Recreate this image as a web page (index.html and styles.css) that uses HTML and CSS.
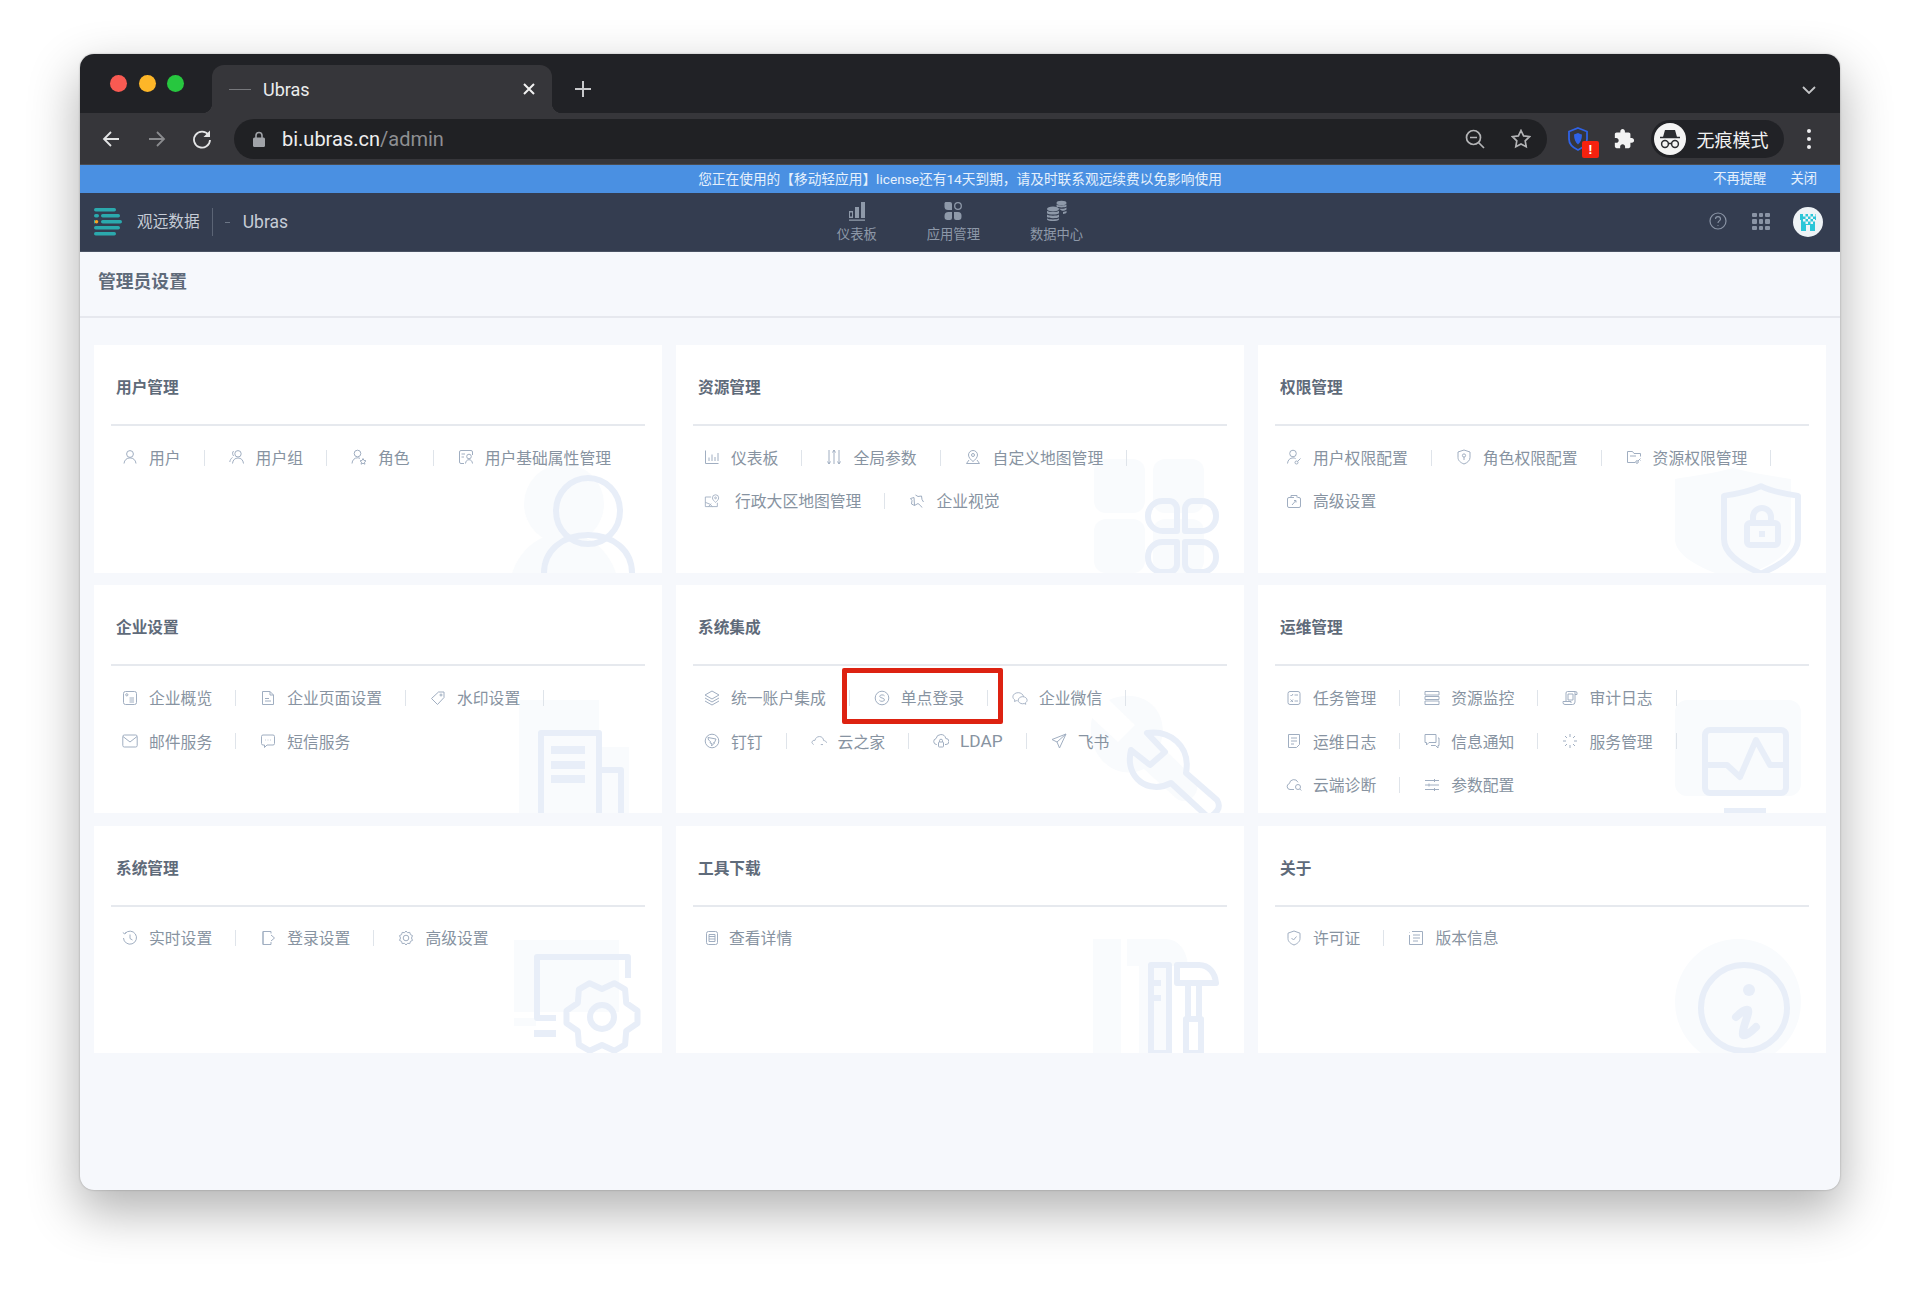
FILE: index.html
```html
<!DOCTYPE html>
<html lang="zh-CN">
<head>
    <meta charset="UTF-8">
    <title>Ubras</title>
    <link rel="stylesheet" href="styles.css">
</head>
<body>
    <svg class="sprite" xmlns="http://www.w3.org/2000/svg">
        <symbol id="i-user" viewBox="0 0 16 16"><circle cx="8" cy="5" r="3.4"/><path d="M2 14.5c.4-3.6 2.8-5.6 6-5.6s5.600 2 6 5.600"/></symbol>
        <symbol id="i-users" viewBox="0 0 16 16"><circle cx="9" cy="4.800" r="3.200"/><path d="M3.500 14.500c.4-3.600 2.500-5.500 5.500-5.500s5.100 1.900 5.500 5.500M4.700 2C3.300 2.800 3.200 5.500 4.600 7M3.500 8.500C2 9.500 1 11 .8 13"/></symbol>
        <symbol id="i-role" viewBox="0 0 16 16"><circle cx="6.500" cy="4.500" r="3.300"/><path d="M1 14.500c.3-3.600 2.500-5.700 5.500-5.700 1 0 1.800.2 2.500.6M12 9.500l1 2 2 .3-1.500 1.400.4 2-1.900-1-1.900 1 .4-2-1.500-1.400 2-.3z"/></symbol>
        <symbol id="i-attr" viewBox="0 0 16 16"><path d="M14.500 6V3a1.500 1.500 0 0 0-1.500-1.500H3A1.500 1.500 0 0 0 1.500 3v10A1.500 1.500 0 0 0 3 14.500h3M3.500 5h3.500M3.500 8H6"/><circle cx="11" cy="7.500" r="2.300"/><path d="M7.500 14.500c.3-2.500 1.600-3.800 3.500-3.800s3.200 1.300 3.500 3.800"/></symbol>
        <symbol id="i-chart" viewBox="0 0 16 16"><path d="M1.500 1.500v13h13M5 12V8.500M8 12V5.500M11 12V8M14 12V4"/></symbol>
        <symbol id="i-sliders" viewBox="0 0 16 16"><path d="M3 1v14M1.500 12.500L3 15l1.500-2.500M8 1v14M6.500 3.500L8 1l1.500 2.500M13 1v14M11.500 12.500L13 15l1.500-2.500"/></symbol>
        <symbol id="i-pin" viewBox="0 0 16 16"><path d="M8 1.500a4.500 4.500 0 0 0-4.500 4.500c0 2.500 2.500 5 4.500 6.500 2-1.500 4.500-4 4.500-6.500A4.500 4.500 0 0 0 8 1.500zM4 11l-2.500 3.500h13L12 11"/><circle cx="8" cy="6" r="1.500"/></symbol>
        <symbol id="i-map" viewBox="0 0 18 16"><path d="M8 3.500H1.500v10.800h13.500V10M1.500 9.500l5 2 3 2.800M5 14.300l3-3.300"/><path d="M13 1a3.500 3.500 0 0 0-3.500 3.500c0 2 2 3.700 3.500 5 1.500-1.300 3.500-3 3.500-5A3.500 3.500 0 0 0 13 1z"/><circle cx="13" cy="4.500" r="1"/></symbol>
        <symbol id="i-vision" viewBox="0 0 16 16"><path d="M6.500 2L9 3.500l3.500-.5.500 3.500 1.500 2.500M5.500 12.500L2.500 11 3 7.500 1.500 5.500l3.500-1zM9 10.500l2.500 2 1.500 2"/><path d="M5.500 12.500L9 10.500"/></symbol>
        <symbol id="i-userkey" viewBox="0 0 16 16"><circle cx="7" cy="4.500" r="3.300"/><path d="M1.500 14.500c.3-3.500 2.500-5.600 5.500-5.600 1 0 1.900.2 2.600.7M14.500 9.500l-3 3"/><circle cx="10.500" cy="13.500" r="1.500"/></symbol>
        <symbol id="i-shieldkey" viewBox="0 0 16 16"><path d="M8 1l6 2v5.500c0 3-2.500 5.200-6 6.500-3.500-1.300-6-3.500-6-6.500V3z"/><circle cx="8" cy="6.500" r="1.600"/><path d="M8 8v3"/></symbol>
        <symbol id="i-folderkey" viewBox="0 0 16 16"><path d="M9 13.500H1.500v-11h5l1.500 2h6.500v3M4 7h6"/><circle cx="11" cy="13" r="1.300"/><path d="M12 12l2.500-2.500M13.500 10.500l1 1"/></symbol>
        <symbol id="i-boxlink" viewBox="0 0 16 16"><path d="M5 4.500V2.500h6v2M11.500 4.500H13a1.500 1.500 0 0 1 1.500 1.500v7a1.500 1.500 0 0 1-1.500 1.500H3A1.500 1.500 0 0 1 1.500 13V6A1.500 1.500 0 0 1 3 4.500h5M6 12l3.500-4M8 7.500h2v2"/></symbol>
        <symbol id="i-overview" viewBox="0 0 16 16"><rect x="1.500" y="1.500" width="13" height="13" rx="2"/><circle cx="4.800" cy="4.800" r="1.100"/><path d="M7.500 8h4.500M7.500 10h4.500M7.500 12h4.500"/></symbol>
        <symbol id="i-doc" viewBox="0 0 16 16"><path d="M2.500 1.500h7.500l3.500 3.500v9.500h-11zM10 1.500V5h3.500M5 8.500h4M5 11h6"/></symbol>
        <symbol id="i-tag" viewBox="0 0 16 16"><path d="M8.500 2H14v5.500L7.500 14.500 1.500 8.500z"/><circle cx="11" cy="5" r="1"/></symbol>
        <symbol id="i-mail" viewBox="0 0 16 16"><rect x=".8" y="2" width="14.400" height="12" rx="1.500"/><path d="M1 3.500l7 5.500 7-5.500"/></symbol>
        <symbol id="i-sms" viewBox="0 0 16 16"><path d="M3 2h10a1.500 1.500 0 0 1 1.500 1.500v7A1.500 1.500 0 0 1 13 12H7l-2.500 2.500V12H3a1.500 1.500 0 0 1-1.500-1.500v-7A1.500 1.500 0 0 1 3 2z"/><path d="M5 7h.6M7.700 7h.6M10.400 7h.6"/></symbol>
        <symbol id="i-layers" viewBox="0 0 16 16"><path class="soft" d="M8 1L15 5 8 9 1 5z"/><path d="M1 8l7 4 7-4M1 11l7 4 7-4"/></symbol>
        <symbol id="i-sso" viewBox="0 0 16 16"><circle cx="8" cy="8" r="6.800"/><path d="M10.500 5.800C9.800 4.600 6 4.400 5.700 6.200 5.400 8.400 10.800 7.500 10.500 10c-.3 1.800-4.300 1.700-5.100.200"/></symbol>
        <symbol id="i-wechat" viewBox="0 0 18 16"><path d="M7 2C3.700 2 1 4 1 6.600c0 1.500.9 2.700 2.200 3.600L2.800 12l2-1c.5.100 1 .2 1.500.2"/><path d="M13 6.500c-.5-2.600-3-4.500-6-4.500M12 6.500c-2.800 0-5 1.800-5 4s2.200 4 5 4c.6 0 1.200-.1 1.700-.3l1.800.9-.4-1.700c1.200-.7 1.900-1.800 1.900-2.900 0-2.200-2.200-4-5-4z"/></symbol>
        <symbol id="i-ding" viewBox="0 0 16 16"><circle cx="8" cy="8" r="6.800"/><path class="soft" d="M4 4.500l8 1.500-1.500 3.500-1 .2 1 .3-3 3 .5-2.500-2-.5.500-1.500L4.500 7z"/></symbol>
        <symbol id="i-cloud" viewBox="0 0 18 16"><path d="M1 9.500C1.500 7.500 3 7 4.500 7.300 5 4.500 7 3 9.500 3c2.800 0 4.500 2 4.700 4.500 1.800.1 3 1 3.300 2.500M1 9.500c.3 1.200 1 2 2 2.500M13.500 12H11"/></symbol>
        <symbol id="i-ldap" viewBox="0 0 16 16"><path d="M4 11.500H3.500A3 3 0 0 1 3 5.600 5 5 0 0 1 12.800 5.500a3 3 0 0 1 .2 6H12"/><rect x="5.500" y="9" width="5" height="5" rx=".8"/><path d="M6.500 9V7.700a1.500 1.500 0 0 1 3 0V9"/></symbol>
        <symbol id="i-plane" viewBox="0 0 16 16"><path d="M15 1L1 6.500l5 2.500 2.500 6zM6 9l9-8"/></symbol>
        <symbol id="i-task" viewBox="0 0 16 16"><rect x="2" y="1.500" width="12" height="13" rx="2"/><path d="M8.500 5H12M8.500 11H12M4.500 5l1 1 1.500-2M4.500 9.500l2.500 2.500M7 9.500L4.500 12"/></symbol>
        <symbol id="i-rows" viewBox="0 0 16 16"><path d="M1 1.500h14v3.500H1zM1 6.500h14v3H1zM1 11h14v3.500H1z"/></symbol>
        <symbol id="i-audit" viewBox="0 0 16 16"><path d="M4 11.500V3a1.500 1.500 0 0 1 1.500-1.500h8A1.500 1.500 0 0 1 15 3v1.500h-2M13 1.500V12a2.500 2.500 0 0 1-2.500 2.500H3a2 2 0 0 1-2-2v-1h8V13"/><path class="soft" d="M6 4h5v6H6z"/></symbol>
        <symbol id="i-log" viewBox="0 0 16 16"><path d="M2.500 1.500h11v10l-3 3h-8zM5 5h6M5 8h6M5 11h3"/></symbol>
        <symbol id="i-msg" viewBox="0 0 16 16"><path d="M1 1.500h11v8H5l-2.500 2.500V9.500H1zM14 5h1v7.500h-1V15l-2.500-2.500H7"/></symbol>
        <symbol id="i-spin" viewBox="0 0 16 16"><path d="M8 1v3M8 12v3M1 8h3M12 8h3M3 3l2 2M11 11l2 2M3 13l2-2M11 5l2-2"/></symbol>
        <symbol id="i-clouddiag" viewBox="0 0 16 16"><path d="M8 12.500H4a3 3 0 0 1-.6-5.900A4.500 4.500 0 0 1 12 5.300"/><circle cx="12" cy="10" r="2.500"/><path d="M13.800 12l1.500 1.500"/></symbol>
        <symbol id="i-params" viewBox="0 0 16 16"><path d="M1 3.500h14M1 8h14M1 12.500h14M10.500 2v3M5 6.500v3M10.500 11v3"/></symbol>
        <symbol id="i-history" viewBox="0 0 16 16"><path d="M3 3.500A6.500 6.500 0 1 1 1.500 8M.8 2.500l2 1.500 1.500-2M8 4.500V8.500l2.500 1.500"/></symbol>
        <symbol id="i-login" viewBox="0 0 16 16"><path d="M11 3.500V1.500H3v13h8V12M3 1.500l0 13M11 5l3.500 3L11 11"/></symbol>
        <symbol id="i-gear" viewBox="0 0 16 16"><path d="M8 1l1.500 1.700 2.300-.3.600 2.200 2.100 1L13.500 8l1 2.400-2.100 1-.6 2.200-2.300-.3L8 15l-1.500-1.700-2.300.3-.6-2.200-2.100-1L2.500 8l-1-2.400 2.100-1 .6-2.200 2.300.3z"/><circle cx="8" cy="8" r="2.800"/></symbol>
        <symbol id="i-details" viewBox="0 0 16 16"><rect x="2.500" y="1.500" width="11" height="13" rx="2"/><path class="soft" d="M5 4.500h6v7H5z"/><path d="M5 6.500h6M5 9h6"/></symbol>
        <symbol id="i-license" viewBox="0 0 16 16"><path d="M8 1l6 2.200v5.300c0 3-2.500 5.200-6 6.500-3.500-1.300-6-3.500-6-6.500V3.200zM5.500 8L7.500 10l3-3.500"/></symbol>
        <symbol id="i-version" viewBox="0 0 16 16"><path d="M1.500 2v.5M4 1.500h10.500v13h-13V5M5 5h7M5 8h7M5 11h5"/></symbol>
    </svg>

    <div class="window">
        <div class="tabstrip">
            <div class="lights"><i class="light red"></i><i class="light yellow"></i><i class="light green"></i></div>
            <div class="tab">
                <span class="favicon"></span>
                <span class="tab-title">Ubras</span>
                <svg class="tab-close" viewBox="0 0 14 14"><path d="M2 2l10 10M12 2L2 12"/></svg>
            </div>
            <svg class="tab-new" viewBox="0 0 18 18"><path d="M9 1v16M1 9h16"/></svg>
            <svg class="tab-list" viewBox="0 0 14 8"><path d="M1 1l6 6 6-6"/></svg>
        </div>

        <div class="toolbar">
            <svg class="tool-btn" viewBox="0 0 20 20"><path d="M18 10H3M10 3l-7 7 7 7"/></svg>
            <svg class="tool-btn dim" viewBox="0 0 20 20"><path d="M2 10h15M10 3l7 7-7 7"/></svg>
            <svg class="tool-btn" viewBox="0 0 20 20"><path d="M16.500 6A8 8 0 1 0 18 11"/><path class="solid" d="M18 1.500V8h-6.500z"/></svg>
            <div class="omnibox">
                <svg class="lock" viewBox="0 0 12 16"><path d="M3 7V4.500a3 3 0 0 1 6 0V7" fill="none" stroke="#a0a3a8" stroke-width="1.600"/><rect y="6.500" width="12" height="9.500" rx="1.500" fill="#a0a3a8"/></svg>
                <span class="url">bi.ubras.cn<span class="url-path">/admin</span></span>
                <svg class="omni-btn" viewBox="0 0 20 20"><circle cx="8.500" cy="8.500" r="7"/><path d="M5 8.500h7M13.500 13.500l5.500 5.500"/></svg>
                <svg class="omni-btn" viewBox="0 0 20 20"><path d="M10 1.500l2.600 5.400 5.900.800-4.300 4.100 1 5.900-5.200-2.800-5.200 2.800 1-5.900-4.300-4.100 5.900-.8z"/></svg>
            </div>
            <div class="ext-shield">
                <svg viewBox="0 0 20 24"><path d="M10 1l9 3.500v7.500c0 4.500-3.500 8.500-9 11-5.500-2.500-9-6.500-9-11V4.500z" fill="none" stroke="#2f62e6" stroke-width="1.800"/><path d="M10 6c2.500 1 4 1.500 4 1.500 0 4.500-1.500 8-4 10-2.500-2-4-5.500-4-10z" fill="#2f62e6"/></svg>
                <span class="ext-badge">!</span>
            </div>
            <svg class="ext-puzzle" viewBox="0 0 24 24"><path d="M20.500 11H19V7c0-1.100-.9-2-2-2h-4V3.500C13 2.120 11.880 1 10.500 1S8 2.120 8 3.500V5H4c-1.100 0-1.990.9-1.990 2v3.800H3.500c1.490 0 2.700 1.210 2.700 2.700s-1.210 2.700-2.700 2.700H2V20c0 1.100.9 2 2 2h3.800v-1.500c0-1.490 1.210-2.700 2.700-2.700 1.490 0 2.700 1.210 2.700 2.700V22H17c1.100 0 2-.9 2-2v-4h1.500c1.380 0 2.500-1.120 2.500-2.500S21.880 11 20.500 11z"/></svg>
            <div class="incognito">
                <svg class="incognito-face" viewBox="0 0 32 32"><circle cx="16" cy="16" r="16" fill="#f4f4f4"/><path d="M11 7h10l2 7H9z" fill="#2b2c30"/><path d="M6 14.500h20" stroke="#2b2c30" stroke-width="1.600"/><circle cx="11" cy="21" r="3.400" fill="none" stroke="#2b2c30" stroke-width="1.500"/><circle cx="21" cy="21" r="3.400" fill="none" stroke="#2b2c30" stroke-width="1.500"/><path d="M14.400 20.500h3.200" stroke="#2b2c30" stroke-width="1.300"/></svg>
                <span>无痕模式</span>
            </div>
            <div class="more"><i></i><i></i><i></i></div>
        </div>

        <div class="banner">
            <span class="banner-text">您正在使用的【移动轻应用】license还有14天到期，请及时联系观远续费以免影响使用</span>
            <div class="banner-links"><span>不再提醒</span><span>关闭</span></div>
        </div>

        <header class="appnav">
            <div class="brand">
                <svg class="logo" viewBox="0 0 28 28"><g fill="#2ba9ad"><rect x="0" y="0" width="22" height="3.400" rx="1.700"/><rect x="7" y="6" width="19" height="3.400" rx="1.700"/><rect x="7" y="12" width="21" height="3.400" rx="1.700"/><rect x="0" y="18" width="26" height="3.400" rx="1.700"/><rect x="0" y="24" width="22" height="3.400" rx="1.700"/><rect x="0" y="6" width="5" height="3.400" rx="1.700"/><rect x="0" y="12" width="1" height="3.400"/></g><circle cx="2.500" cy="13.700" r="1.800" fill="#f5a623"/></svg>
                <span class="brand-name">观远数据</span>
                <span class="brand-dash"></span>
                <span class="brand-org">Ubras</span>
            </div>
            <nav class="appnav-menu">
                <div class="menu-item">
                    <svg viewBox="0 0 20 22"><g fill="#8e99a9"><path d="M2 11h4v7H2zM3 12.500v4h2v-4z" fill-rule="evenodd"/><rect x="8" y="7" width="4" height="11"/><rect x="14" y="2" width="4" height="16"/><rect x="2" y="19.500" width="16" height="1.300"/></g></svg>
                    <span>仪表板</span>
                </div>
                <div class="menu-item">
                    <svg viewBox="0 0 20 22"><g fill="#8e99a9"><path d="M3 2h4a2 2 0 0 1 2 2v6H5a3.500 3.500 0 0 1-3.500-3.500V3.500C1.500 2.700 2.200 2 3 2z"/><path d="M9 12v6a2 2 0 0 1-2 2H4.500A3 3 0 0 1 1.500 17v-1A4 4 0 0 1 5.500 12z"/><path d="M11 12h4a3.500 3.500 0 0 1 3.500 3.500V17a3 3 0 0 1-3 3H13a2 2 0 0 1-2-2z"/></g><circle cx="15" cy="6" r="3.300" fill="none" stroke="#8e99a9" stroke-width="1.300"/></svg>
                    <span>应用管理</span>
                </div>
                <div class="menu-item">
                    <svg viewBox="0 0 22 22"><g fill="#8e99a9"><ellipse cx="15.500" cy="3" rx="5" ry="2.200"/><path d="M10.500 4.500c1 1.200 9 1.200 10 0V6.500c-1 1.200-9 1.200-10 0zM12.500 8.500c3 .5 6.800.3 8-1v2c-.8.900-2.500 1.200-4.500 1.300zM17 12c1.500-.1 2.800-.5 3.500-1.200v2c-.6.700-1.800 1.100-3.500 1.200z"/><ellipse cx="7" cy="9" rx="6" ry="2.500"/><path d="M1 10.800c1.200 1.600 10.800 1.600 12 0v2.500c-1.200 1.600-10.800 1.600-12 0zM1 14.500c1.200 1.600 10.800 1.600 12 0V17c-1.200 1.600-10.800 1.600-12 0zM1 18.200c1.200 1.600 10.800 1.600 12 0v1.300c-1.200 2-10.800 2-12 0z"/></g></svg>
                    <span>数据中心</span>
                </div>
            </nav>
            <div class="appnav-right">
                <svg class="help" viewBox="0 0 18 18"><circle cx="9" cy="9" r="8"/><path d="M6.500 7c0-3.300 5-3.300 5 0 0 2-2.500 1.800-2.500 4M9 13v.8"/></svg>
                <div class="apps"><i></i><i></i><i></i><i></i><i></i><i></i><i></i><i></i><i></i></div>
                <svg class="avatar" viewBox="0 0 30 30"><circle cx="15" cy="15" r="15" fill="#eef3f6"/><path d="M7 7h16v6h-1v11h-5v-6h-4v6H8V13H7z" fill="#2bc6d8"/><path d="M10 7h2.500v2.500H10zM15 7h2.500v2.500H15zM20 7h2.500v2.500H20zM12.500 9.500H15V12h-2.500zM17.500 9.500H20V12h-2.500zM10 12h2.500v2.500H10zM15 12h2.500v2.500H15zM20 12h2v2.500h-2zM12.500 14.500H15V17h-2.500zM17.500 14.500H20V17h-2.500z" fill="#eef3f6"/></svg>
            </div>
        </header>

        <main class="page">
            <h1 class="page-title">管理员设置</h1>
            <div class="cards">

                <section class="card">
                    <svg class="mark-bg" viewBox="0 0 160 130">
                        <g class="blob"><circle cx="62" cy="61" r="40"/><ellipse cx="62" cy="150" rx="55" ry="60"/></g>
                        <g class="line"><ellipse cx="86" cy="68" rx="32" ry="33"/><path d="M42 130c0-22 18-38 44-38s44 16 44 38"/></g>
                    </svg>
                    <h2 class="card-title">用户管理</h2>
                    <ul class="links">
                        <li><svg class="ico"><use href="#i-user"/></svg>用户</li>
                        <li><svg class="ico"><use href="#i-users"/></svg>用户组</li>
                        <li><svg class="ico"><use href="#i-role"/></svg>角色</li>
                        <li><svg class="ico"><use href="#i-attr"/></svg>用户基础属性管理</li>
                    </ul>
                </section>

                <section class="card">
                    <svg class="mark-bg" viewBox="0 0 160 130">
                        <g class="blob"><rect x="10" y="16" width="51" height="54" rx="12"/><rect x="69" y="16" width="51" height="54" rx="12"/><rect x="10" y="76" width="51" height="54" rx="12"/><rect x="69" y="76" width="51" height="54" rx="12"/></g>
                        <g class="line"><path d="M78.500 58H85a8 8 0 0 1 8 8v22H78.500A14.500 14.500 0 0 1 64 73.500v-1A14.500 14.500 0 0 1 78.500 58zM101 66a8 8 0 0 1 8-8h8.500A14.500 14.500 0 0 1 132 72.500v1A14.500 14.500 0 0 1 117.500 88H101zM64 113.500A14.500 14.500 0 0 1 78.500 99H93v22a8 8 0 0 1-8 8h-6.500A14.500 14.500 0 0 1 64 114.500zM101 99h16.500A14.500 14.500 0 0 1 132 113.500v1a14.500 14.500 0 0 1-14.500 14.500H109a8 8 0 0 1-8-8z"/></g>
                    </svg>
                    <h2 class="card-title">资源管理</h2>
                    <ul class="links">
                        <li><svg class="ico"><use href="#i-chart"/></svg>仪表板</li>
                        <li><svg class="ico"><use href="#i-sliders"/></svg>全局参数</li>
                        <li class="wide"><svg class="ico"><use href="#i-pin"/></svg>自定义地图管理</li>
                        <li class="wider"><svg class="ico"><use href="#i-map"/></svg>行政大区地图管理</li>
                        <li><svg class="ico"><use href="#i-vision"/></svg>企业视觉</li>
                    </ul>
                </section>

                <section class="card">
                    <svg class="mark-bg" viewBox="0 0 160 130">
                        <path class="blob" d="M9 36c18-3 40-6 58-11 18 5 40 8 58 11v60c0 16-24 30-58 40C33 126 9 112 9 96z"/>
                        <g class="line"><path d="M96 46c-10 5-23 8-37 10v45c0 15 15 26 37 36 22-10 37-21 37-36V56c-14-2-27-5-37-10z" transform="translate(-1 -1) scale(1 .96)"/><rect x="81" y="80" width="31" height="22" rx="3"/><path d="M87 80v-6a9 9 0 0 1 18 0v6M96 88v6"/></g>
                    </svg>
                    <h2 class="card-title">权限管理</h2>
                    <ul class="links">
                        <li><svg class="ico"><use href="#i-userkey"/></svg>用户权限配置</li>
                        <li><svg class="ico"><use href="#i-shieldkey"/></svg>角色权限配置</li>
                        <li><svg class="ico"><use href="#i-folderkey"/></svg>资源权限管理</li>
                        <li><svg class="ico"><use href="#i-boxlink"/></svg>高级设置</li>
                    </ul>
                </section>

                <section class="card">
                    <svg class="mark-bg" viewBox="0 0 160 130">
                        <path class="blob" d="M17 17h80v47h30v66H17z"/>
                        <g class="line"><path d="M39 130V50h58v80M97 87h22v43"/></g>
                        <g class="bars"><rect x="49" y="63" width="34" height="8"/><rect x="49" y="78" width="34" height="8"/><rect x="49" y="92" width="34" height="8"/></g>
                    </svg>
                    <h2 class="card-title">企业设置</h2>
                    <ul class="links">
                        <li><svg class="ico"><use href="#i-overview"/></svg>企业概览</li>
                        <li><svg class="ico"><use href="#i-doc"/></svg>企业页面设置</li>
                        <li><svg class="ico"><use href="#i-tag"/></svg>水印设置</li>
                        <li><svg class="ico"><use href="#i-mail"/></svg>邮件服务</li>
                        <li><svg class="ico"><use href="#i-sms"/></svg>短信服务</li>
                    </ul>
                </section>

                <section class="card">
                    <svg class="mark-bg" viewBox="0 0 160 130">
                        <path class="blob" d="M8 35l26 24 17-17-26-25C60 2 88 30 76 62l35 34c8 10-5 28-18 20L60 86C30 100 0 70 8 35z"/>
                        <g class="line"><path d="M47 67l19 15 15-13-18-19c22-3 44 12 39 40l31 27c5 8-1 13-8 18l-38-35c-22 12-47-5-40-33z"/></g>
                    </svg>
                    <h2 class="card-title">系统集成</h2>
                    <ul class="links">
                        <li><svg class="ico"><use href="#i-layers"/></svg>统一账户集成</li>
                        <li class="marked"><svg class="ico"><use href="#i-sso"/></svg>单点登录</li>
                        <li><svg class="ico"><use href="#i-wechat"/></svg>企业微信</li>
                        <li><svg class="ico"><use href="#i-ding"/></svg>钉钉</li>
                        <li><svg class="ico"><use href="#i-cloud"/></svg>云之家</li>
                        <li class="latin"><svg class="ico"><use href="#i-ldap"/></svg>LDAP</li>
                        <li><svg class="ico"><use href="#i-plane"/></svg>飞书</li>
                    </ul>
                </section>

                <section class="card">
                    <svg class="mark-bg" viewBox="0 0 160 130">
                        <rect class="blob" x="9" y="17" width="126" height="96" rx="12"/>
                        <g class="line"><rect x="39" y="47" width="81" height="63" rx="5"/><path d="M38 82h23l13 12 16-37 14 25h16"/></g>
                        <rect class="bars" x="58" y="125" width="42" height="5"/>
                    </svg>
                    <h2 class="card-title">运维管理</h2>
                    <ul class="links">
                        <li><svg class="ico"><use href="#i-task"/></svg>任务管理</li>
                        <li><svg class="ico"><use href="#i-rows"/></svg>资源监控</li>
                        <li><svg class="ico"><use href="#i-audit"/></svg>审计日志</li>
                        <li><svg class="ico"><use href="#i-log"/></svg>运维日志</li>
                        <li><svg class="ico"><use href="#i-msg"/></svg>信息通知</li>
                        <li><svg class="ico"><use href="#i-spin"/></svg>服务管理</li>
                        <li><svg class="ico"><use href="#i-clouddiag"/></svg>云端诊断</li>
                        <li><svg class="ico"><use href="#i-params"/></svg>参数配置</li>
                    </ul>
                </section>

                <section class="card">
                    <svg class="mark-bg" viewBox="0 0 160 130">
                        <path class="blob" d="M12 17h105v72H12zM12 95h22v8H12z"/>
                        <g class="line"><path d="M126 55V34H35v61h19"/><path d="M135.500 87.800v12.400l-11.300 7.800-1.100 13.600-10.800 6.200L100 122l-12.300 5.800-10.800-6.200-1.100-13.600-11.300-7.800V87.800L75.800 80l1.100-13.600 10.800-6.200L100 66l12.300-5.800 10.800 6.200 1.100 13.600z"/><circle cx="100" cy="94" r="12"/></g>
                        <rect class="bars" x="32" y="107" width="22" height="7"/>
                    </svg>
                    <h2 class="card-title">系统管理</h2>
                    <ul class="links">
                        <li><svg class="ico"><use href="#i-history"/></svg>实时设置</li>
                        <li><svg class="ico"><use href="#i-login"/></svg>登录设置</li>
                        <li><svg class="ico"><use href="#i-gear"/></svg>高级设置</li>
                    </ul>
                </section>

                <section class="card">
                    <svg class="mark-bg" viewBox="0 0 160 130">
                        <path class="blob" d="M9 16h28v114H9zM43 16h38c14 0 22 12 23 27H86v87H55V43H43z"/>
                        <g class="line"><path d="M67 42h18v88H67zM67 60h10M67 75h10"/><path d="M93 42h22c10 0 16 8 17 18H93zM104 60v36h11V60M102 96h15v34h-15z"/></g>
                    </svg>
                    <h2 class="card-title">工具下载</h2>
                    <ul class="links">
                        <li class="narrow"><svg class="ico"><use href="#i-details"/></svg>查看详情</li>
                    </ul>
                </section>

                <section class="card">
                    <svg class="mark-bg" viewBox="0 0 160 130">
                        <circle class="blob" cx="72" cy="79" r="63"/>
                        <g class="line"><circle cx="78" cy="85" r="43"/></g>
                        <circle class="bars" cx="83" cy="67" r="6"/>
                        <path class="info-stem" d="M70 94c5-5 10-8 12-7 2 3-7 20-5 25 2 2 8-3 13-8"/>
                    </svg>
                    <h2 class="card-title">关于</h2>
                    <ul class="links">
                        <li><svg class="ico"><use href="#i-license"/></svg>许可证</li>
                        <li><svg class="ico"><use href="#i-version"/></svg>版本信息</li>
                    </ul>
                </section>

            </div>
        </main>
    </div>
</body>
</html>
```

FILE: styles.css
```css
* {
    box-sizing: border-box;
}
html, body {
    margin: 0;
    height: 100%;
}
body {
    padding: 54px 80px 0;
    background: #fff;
    font-family: Roboto, "Noto Sans CJK SC", sans-serif;
}
.sprite {
    display: none;
}
h1, h2, ul {
    margin: 0;
    padding: 0;
}

.window {
    height: 1136px;
    border-radius: 14px;
    overflow: hidden;
    background: #f6f8fc;
    box-shadow: 0 20px 50px 2px rgba(0, 0, 0, 0.3), 0 0 2px rgba(0, 0, 0, 0.3);
}

/* browser chrome */
.tabstrip {
    position: relative;
    display: flex;
    align-items: flex-end;
    height: 59px;
    background: #212226;
}
.lights {
    display: flex;
    gap: 11.5px;
    align-self: center;
    margin-left: 30px;
    margin-right: 28px;
}
.light {
    width: 17px;
    height: 17px;
    border-radius: 50%;
}
.red { background: #f95a52; }
.yellow { background: #fdb628; }
.green { background: #27c73f; }
.tab {
    position: relative;
    display: flex;
    align-items: center;
    width: 340px;
    height: 48px;
    padding: 0 16px 0 17px;
    background: #36363a;
    border-radius: 12px 12px 0 0;
}
.tab::before,
.tab::after {
    content: "";
    position: absolute;
    bottom: 0;
    width: 10px;
    height: 10px;
}
.tab::before {
    left: -10px;
    background: radial-gradient(circle at 0 0, transparent 10px, #36363a 10.5px);
}
.tab::after {
    right: -10px;
    background: radial-gradient(circle at 100% 0, transparent 10px, #36363a 10.5px);
}
.favicon {
    width: 22px;
    height: 1px;
    margin-right: 12px;
    background: #77787c;
}
.tab-title {
    flex: 1;
    color: #eceded;
    font-size: 18px;
}
.tab-close {
    width: 14px;
    height: 14px;
    fill: none;
    stroke: #f1f1f1;
    stroke-width: 2;
}
.tab-new {
    width: 18px;
    height: 18px;
    margin: 0 0 15px 22px;
    fill: none;
    stroke: #c8c9cb;
    stroke-width: 2;
}
.tab-list {
    width: 14px;
    height: 8px;
    margin: 0 24px 19px auto;
    fill: none;
    stroke: #c4c5c7;
    stroke-width: 1.800;
}
.toolbar {
    display: flex;
    align-items: center;
    height: 52px;
    padding-left: 21px;
    background: #36363a;
    border-bottom: 1px solid #4b4c50;
}
.tool-btn {
    width: 20px;
    height: 20px;
    margin-right: 25.500px;
    fill: none;
    stroke: #e4e5e6;
    stroke-width: 1.800;
}
.tool-btn.dim {
    stroke: #8a8b8e;
}
.tool-btn .solid {
    fill: #e4e5e6;
    stroke: none;
}
.omnibox {
    display: flex;
    align-items: center;
    width: 1313px;
    height: 40px;
    margin-left: -3.500px;
    padding: 0 16px 0 19px;
    background: #202124;
    border-radius: 20px;
}
.lock {
    width: 12px;
    height: 16px;
    margin-right: 17px;
}
.url {
    flex: 1;
    color: #eeeeef;
    font-size: 20px;
}
.url-path {
    color: #8e8f92;
}
.omni-btn {
    width: 20px;
    height: 20px;
    margin-left: 26px;
    fill: none;
    stroke: #b3b4b6;
    stroke-width: 1.700;
}
.ext-shield {
    position: relative;
    width: 20px;
    height: 24px;
    margin-left: 21px;
    margin-right: 25px;
}
.ext-shield svg {
    display: block;
}
.ext-badge {
    position: absolute;
    left: 14px;
    top: 14px;
    width: 17px;
    height: 17px;
    border-radius: 2px;
    background: #f5220f;
    color: #fff;
    font: bold 13px/17px "Liberation Sans", sans-serif;
    text-align: center;
}
.ext-puzzle {
    width: 22px;
    height: 22px;
    margin-right: 15.500px;
    fill: #f3f3f3;
}
.incognito {
    display: flex;
    align-items: center;
    gap: 11px;
    width: 133px;
    height: 38px;
    padding-left: 3px;
    background: #212226;
    border-radius: 19px;
    color: #f1f1f1;
    font-size: 18px;
}
.incognito-face {
    width: 32px;
    height: 32px;
}
.more {
    display: flex;
    flex-direction: column;
    gap: 4px;
    margin-left: 23.500px;
}
.more i {
    width: 4px;
    height: 4px;
    border-radius: 50%;
    background: #eeeeef;
}

/* app header */
.banner {
    position: relative;
    display: flex;
    justify-content: center;
    align-items: center;
    height: 28px;
    padding-bottom: 2px;
    background: #4a90e2;
    color: #e6f0fc;
    font-size: 13.700px;
}
.banner-links {
    position: absolute;
    right: 23px;
    top: 0;
    display: flex;
    gap: 24px;
    font-size: 13.300px;
    line-height: 28px;
}
.appnav {
    display: grid;
    grid-template-columns: 1fr auto 1fr;
    align-items: center;
    height: 59px;
    background: #343d50;
    border-bottom: 1px solid #4a5364;
}
.brand {
    display: flex;
    align-items: center;
    padding-left: 14px;
}
.logo {
    width: 28px;
    height: 28px;
    margin-right: 15px;
}
.brand-name {
    padding-right: 12px;
    border-right: 1px solid #5b6475;
    color: #c6ccd6;
    font-size: 15.700px;
    line-height: 28px;
}
.brand-dash {
    width: 5px;
    height: 1px;
    margin: 0 13px 0 12px;
    background: #6c7686;
}
.brand-org {
    color: #c6ccd6;
    font-size: 17.500px;
}
.appnav-menu {
    display: flex;
    gap: 50px;
}
.menu-item {
    display: flex;
    flex-direction: column;
    align-items: center;
    gap: 4px;
    color: #8e99a9;
    font-size: 13.300px;
    line-height: 18px;
}
.menu-item svg {
    width: 22px;
    height: 22px;
}
.appnav-right {
    display: flex;
    justify-content: flex-end;
    align-items: center;
    gap: 25px;
    padding-right: 17px;
}
.help {
    width: 18px;
    height: 18px;
    margin-bottom: 3px;
    fill: none;
    stroke: #8a94a5;
    stroke-width: 1.200;
}
.apps {
    display: grid;
    grid-template-columns: repeat(3, 4.600px);
    gap: 2.100px;
    margin: 0 -2px 1px 0;
}
.apps i {
    width: 4.600px;
    height: 4.600px;
    background: #8a94a5;
    border-radius: 1px;
}
.avatar {
    width: 30px;
    height: 30px;
}

/* admin page */
.page-title {
    height: 66px;
    padding-left: 18px;
    border-bottom: 2px solid #e6e8ee;
    color: #5f6b7a;
    font-size: 17.800px;
    font-weight: 700;
    line-height: 60px;
}
.cards {
    display: grid;
    grid-template-columns: repeat(3, 1fr);
    grid-auto-rows: 227.500px;
    gap: 12.800px 14px;
    padding: 27px 14px 0;
}
.card {
    position: relative;
    overflow: hidden;
    background: #fff;
}
.mark-bg {
    position: absolute;
    right: 0;
    bottom: 0;
    width: 160px;
    height: 130px;
}
.mark-bg .blob {
    fill: #f9fbfd;
}
.mark-bg .line {
    fill: none;
    stroke: #e8eef8;
    stroke-width: 6;
    stroke-linejoin: round;
}
.mark-bg .bars {
    fill: #e8eef8;
}
.info-stem {
    fill: none;
    stroke: #e8eef8;
    stroke-width: 8;
    stroke-linecap: round;
}
.card-title {
    position: relative;
    height: 81px;
    margin: 0 17px;
    padding: 31px 0 0 5px;
    border-bottom: 2px solid #e6e9ee;
    color: #5f6b7a;
    font-size: 15.700px;
    font-weight: 700;
    line-height: 24px;
}
.links {
    position: relative;
    display: flex;
    flex-wrap: wrap;
    padding: 9.500px 17px 0 4px;
    list-style: none;
}
.links li {
    position: relative;
    display: flex;
    align-items: center;
    height: 43.500px;
    padding: 0 24px;
    color: #8793a1;
    font-size: 15.800px;
}
.links li::after {
    content: "";
    position: absolute;
    right: 0;
    top: 14px;
    width: 1px;
    height: 16px;
    background: #dfe4ea;
}
.links li:last-child::after {
    display: none;
}
.links li.latin {
    font-size: 17.300px;
}
.ico {
    flex: none;
    width: 16px;
    height: 16px;
    margin-right: 11px;
    fill: none;
    stroke: #a0aec1;
    stroke-width: 1;
    stroke-linejoin: round;
}
.wide .ico {
    margin-right: 12px;
}
.wider .ico {
    margin-right: 15px;
}
.narrow .ico {
    margin-right: 9px;
}
.ico .soft {
    fill: #c6d0dd;
}
.marked::before {
    content: "";
    position: absolute;
    left: -8px;
    top: -8px;
    right: -15px;
    bottom: -5px;
    border: 5px solid #dd2211;
    border-radius: 2px;
}
```
